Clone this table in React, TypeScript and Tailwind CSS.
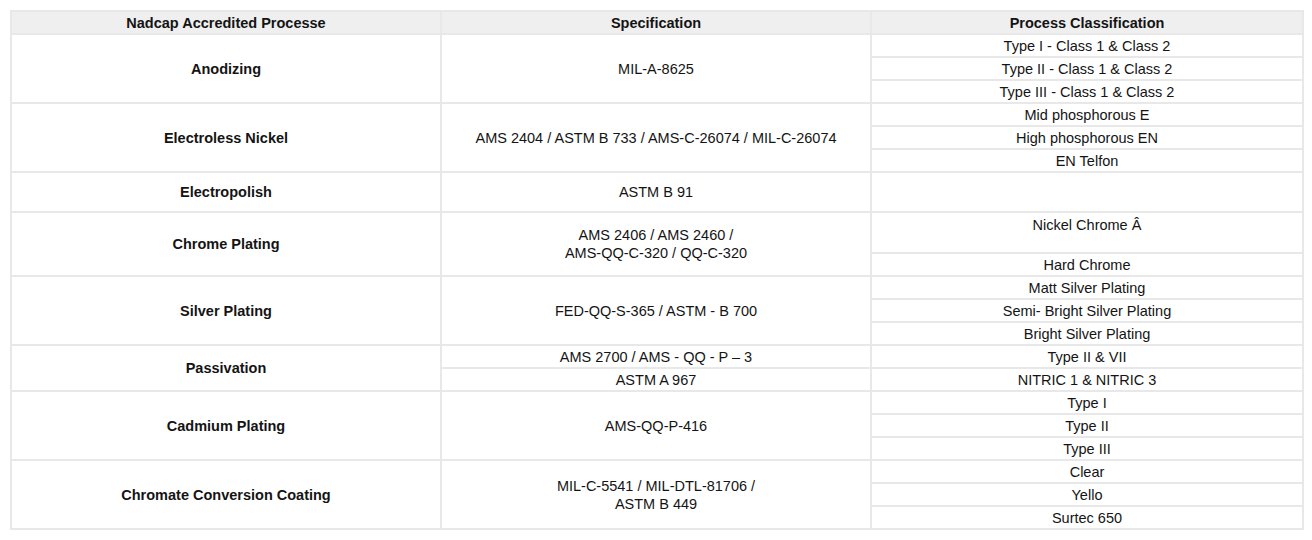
import React from "react";

type Group = {
  process: string;
  specs: { text: React.ReactNode; span: number }[];
  classes: { text: React.ReactNode; h?: string; top?: boolean }[];
};

const groups: Group[] = [
  {
    process: "Anodizing",
    specs: [{ text: "MIL-A-8625", span: 3 }],
    classes: [
      { text: "Type I - Class 1 & Class 2" },
      { text: "Type II - Class 1 & Class 2" },
      { text: "Type III - Class 1 & Class 2" },
    ],
  },
  {
    process: "Electroless Nickel",
    specs: [{ text: "AMS 2404 / ASTM B 733 / AMS-C-26074 / MIL-C-26074", span: 3 }],
    classes: [
      { text: "Mid phosphorous E" },
      { text: "High phosphorous EN" },
      { text: "EN Telfon" },
    ],
  },
  {
    process: "Electropolish",
    specs: [{ text: "ASTM B 91", span: 1 }],
    classes: [{ text: "", h: "h-[40px]" }],
  },
  {
    process: "Chrome Plating",
    specs: [
      {
        text: (
          <>
            AMS 2406 / AMS 2460 /
            <br />
            AMS-QQ-C-320 / QQ-C-320
          </>
        ),
        span: 2,
      },
    ],
    classes: [
      { text: "Nickel Chrome Â", h: "h-[41px]", top: true },
      { text: "Hard Chrome" },
    ],
  },
  {
    process: "Silver Plating",
    specs: [{ text: "FED-QQ-S-365 / ASTM - B 700", span: 3 }],
    classes: [
      { text: "Matt Silver Plating" },
      { text: "Semi- Bright Silver Plating" },
      { text: "Bright Silver Plating" },
    ],
  },
  {
    process: "Passivation",
    specs: [
      { text: "AMS 2700 / AMS - QQ - P – 3", span: 1 },
      { text: "ASTM A 967", span: 1 },
    ],
    classes: [{ text: "Type II & VII" }, { text: "NITRIC 1 & NITRIC 3" }],
  },
  {
    process: "Cadmium Plating",
    specs: [{ text: "AMS-QQ-P-416", span: 3 }],
    classes: [{ text: "Type I" }, { text: "Type II" }, { text: "Type III" }],
  },
  {
    process: "Chromate Conversion Coating",
    specs: [
      {
        text: (
          <>
            MIL-C-5541 / MIL-DTL-81706 /
            <br />
            ASTM B 449
          </>
        ),
        span: 3,
      },
    ],
    classes: [{ text: "Clear" }, { text: "Yello" }, { text: "Surtec 650" }],
  },
];

const td = "border-2 border-[#e8e8e8] px-1 py-0 text-center align-middle";

export default function App() {
  return (
    <div
      className="bg-white pt-[10px] pl-[10px] text-[14.5px] leading-[18px] text-[#141414]"
      style={{ fontFamily: '"Liberation Sans", Arial, sans-serif' }}
    >
      <table className="w-[1292px] table-fixed border-collapse">
        <colgroup>
          <col className="w-[430px]" />
          <col className="w-[430px]" />
          <col className="w-[432px]" />
        </colgroup>
        <thead>
          <tr className="h-[23px] bg-[#efefef] font-bold">
            <th className={td}>Nadcap Accredited Processe</th>
            <th className={td}>Specification</th>
            <th className={td}>Process Classification</th>
          </tr>
        </thead>
        <tbody>
          {groups.map((g) => {
            const rows: React.ReactNode[] = [];
            let specIdx = 0;
            let specRowLeft = 0;
            g.classes.forEach((c, i) => {
              let specCell: React.ReactNode = null;
              if (specRowLeft === 0 && specIdx < g.specs.length) {
                const s = g.specs[specIdx];
                specCell = (
                  <td className={td} rowSpan={s.span}>
                    {s.text}
                  </td>
                );
                specRowLeft = s.span;
                specIdx++;
              }
              specRowLeft--;
              rows.push(
                <tr key={g.process + i} className={c.h ?? "h-[23px]"}>
                  {i === 0 && (
                    <td className={td + " font-bold"} rowSpan={g.classes.length}>
                      {g.process}
                    </td>
                  )}
                  {specCell}
                  <td className={td + (c.top ? " !align-top pt-[3px]" : "")}>
                    {c.text}
                  </td>
                </tr>
              );
            });
            return rows;
          })}
        </tbody>
      </table>
    </div>
  );
}
